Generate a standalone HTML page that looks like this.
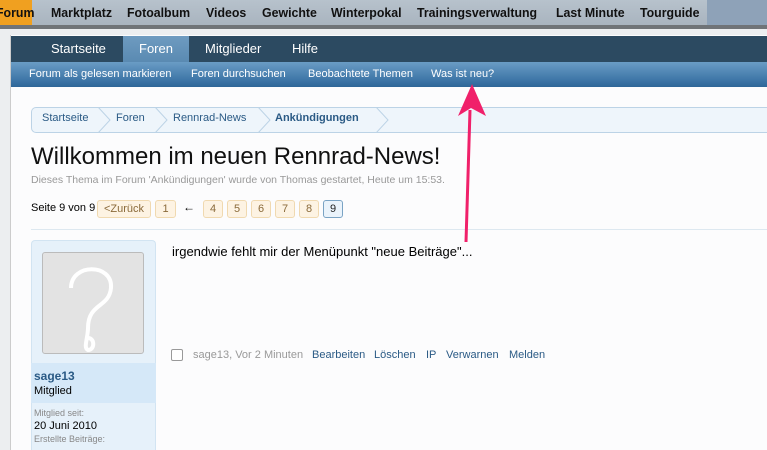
<!DOCTYPE html>
<html><head><meta charset="utf-8"><style>
html,body{margin:0;width:767px;height:450px;overflow:hidden}
body{background:#eceef0;font-family:"Liberation Sans",sans-serif;position:relative}
div,span{position:absolute}
.top{left:0;top:0;width:767px;height:25px;background:linear-gradient(#b7c2cc,#a9b4bf)}
.top span{top:5px;font-size:13px;font-weight:bold;color:#111;transform:scaleX(0.95);transform-origin:left;white-space:nowrap}
.page{left:10px;top:35px;width:757px;height:415px;background:#fcfcfd;border-left:1px solid #ccc}
.nav{left:11px;top:36px;width:756px;height:26px;background:#2c4a61}
.nv{top:41px;color:#fff;font-size:13px}
.sub{left:11px;top:62px;width:756px;height:25px;background:linear-gradient(#6a9cc5,#3f77a8 70%,#2f6698)}
.sv{top:68px;color:#fff;font-size:11px;white-space:nowrap}
.bc{left:31px;top:107px;width:736px;height:24px;border:1px solid #bcd3e6;border-right:none;border-radius:5px 0 0 5px;background:#eef5fb}
.b{top:112px;font-size:11px;color:#2a5a85}
.pg{top:200px;height:16px;border:1px solid #f0d9b0;background:#fdf3e3;border-radius:3px;font-size:11px;color:#8a6a3a;text-align:center;line-height:16px}
.t{font-size:12px;white-space:nowrap}
</style></head><body>
<div class="top"><div style="left:0;top:0;width:32px;height:25px;background:#f0a020"></div><div style="left:707px;top:0;width:60px;height:25px;background:#8ea2b8"></div>
<span style="left:-4px">Forum</span><span style="left:51px">Marktplatz</span><span style="left:127px">Fotoalbum</span><span style="left:206px">Videos</span><span style="left:262px">Gewichte</span><span style="left:331px">Winterpokal</span><span style="left:417px">Trainingsverwaltung</span><span style="left:556px">Last Minute</span><span style="left:640px">Tourguide</span></div>
<div style="left:0;top:25px;width:767px;height:4px;background:#707478"></div>
<div class="page"></div>
<div class="nav"></div>
<div style="left:123px;top:36px;width:66px;height:26px;background:linear-gradient(#6e9bc0,#5a8ab2)"></div>
<span class="nv" style="left:51px">Startseite</span><span class="nv" style="left:139px">Foren</span><span class="nv" style="left:205px">Mitglieder</span><span class="nv" style="left:292px">Hilfe</span>
<div class="sub"></div>
<span class="sv" style="left:29px">Forum als gelesen markieren</span><span class="sv" style="left:191px">Foren durchsuchen</span><span class="sv" style="left:308px">Beobachtete Themen</span><span class="sv" style="left:431px">Was ist neu?</span>
<div class="bc"></div>
<svg style="position:absolute;left:0;top:107px" width="400" height="26"><g stroke="#bcd3e6" fill="none"><path d="M98 0 L110 13 L98 26"/><path d="M155 0 L167 13 L155 26"/><path d="M258 0 L270 13 L258 26"/><path d="M376 0 L388 13 L376 26"/></g></svg>
<span class="b" style="left:42px">Startseite</span><span class="b" style="left:116px">Foren</span><span class="b" style="left:173px">Rennrad-News</span><span class="b" style="left:275px;font-weight:bold">Ankündigungen</span>
<div style="left:31px;top:143px;font-size:24px;color:#111;white-space:nowrap">Willkommen im neuen Rennrad-News!</div>
<div style="left:31px;top:174px;font-size:10.5px;color:#999;white-space:nowrap">Dieses Thema im Forum 'Ankündigungen' wurde von Thomas gestartet, Heute um 15:53.</div>
<div class="t" style="left:31px;top:202px;font-size:11px">Seite 9 von 9</div>
<div class="pg" style="left:97px;width:52px">&lt;Zurück</div>
<div class="pg" style="left:155px;width:19px">1</div>
<div class="t" style="left:183px;top:200px">←</div>
<div class="pg" style="left:203px;width:18px">4</div>
<div class="pg" style="left:227px;width:18px">5</div>
<div class="pg" style="left:251px;width:18px">6</div>
<div class="pg" style="left:275px;width:18px">7</div>
<div class="pg" style="left:299px;width:18px">8</div>
<div class="pg" style="left:323px;width:18px;background:#eaf3fb;border-color:#7aa3c4;color:#222">9</div>
<div style="left:31px;top:229px;width:736px;height:1px;background:#dde8f0"></div>
<div style="left:31px;top:240px;width:123px;height:210px;background:#e6f1fa;border:1px solid #d2e4f2;border-bottom:none;border-radius:4px 4px 0 0"></div>
<div style="left:31px;top:363px;width:125px;height:40px;background:#d5e8f8"></div>
<div style="left:42px;top:252px;width:100px;height:100px;background:#e3e3e3;border:1px solid #bbb;border-radius:3px"><svg width="100" height="100"><path d="M28 35 C28 10 70 10 68 35 C66 55 45 50 45 75 C45 85 40 95 45 97 C52 97 52 85 45 85" stroke="#fff" stroke-width="4" fill="none"/></svg></div>
<div class="t" style="left:34px;top:369px;font-weight:bold;color:#2a5a85">sage13</div>
<div class="t" style="left:34px;top:385px;font-size:11px">Mitglied</div>
<div class="t" style="left:34px;top:408px;font-size:9px;color:#888">Mitglied seit:</div>
<div class="t" style="left:34px;top:420px;font-size:11px">20 Juni 2010</div>
<div class="t" style="left:34px;top:434px;font-size:9px;color:#888">Erstellte Beiträge:</div>
<div class="t" style="left:172px;top:244px;font-size:13px">irgendwie fehlt mir der Menüpunkt "neue Beiträge"...</div>
<div style="left:171px;top:349px;width:10px;height:10px;border:1px solid #999;border-radius:2px;background:#fff"></div>
<div class="t" style="left:193px;top:349px;font-size:11px;color:#999">sage13, Vor 2 Minuten</div>
<span class="t" style="left:312px;top:349px;font-size:11px;color:#2a5a85">Bearbeiten</span>
<span class="t" style="left:374px;top:349px;font-size:11px;color:#2a5a85">Löschen</span>
<span class="t" style="left:426px;top:349px;font-size:11px;color:#2a5a85">IP</span>
<span class="t" style="left:446px;top:349px;font-size:11px;color:#2a5a85">Verwarnen</span>
<span class="t" style="left:509px;top:349px;font-size:11px;color:#2a5a85">Melden</span>
<svg style="position:absolute;left:0;top:0" width="767" height="450"><path d="M466 242 L470 110" stroke="#f0206a" stroke-width="3"/><path d="M472 84 L458 116 L471 108 L486 116 Z" fill="#f0206a"/></svg>
</body></html>
